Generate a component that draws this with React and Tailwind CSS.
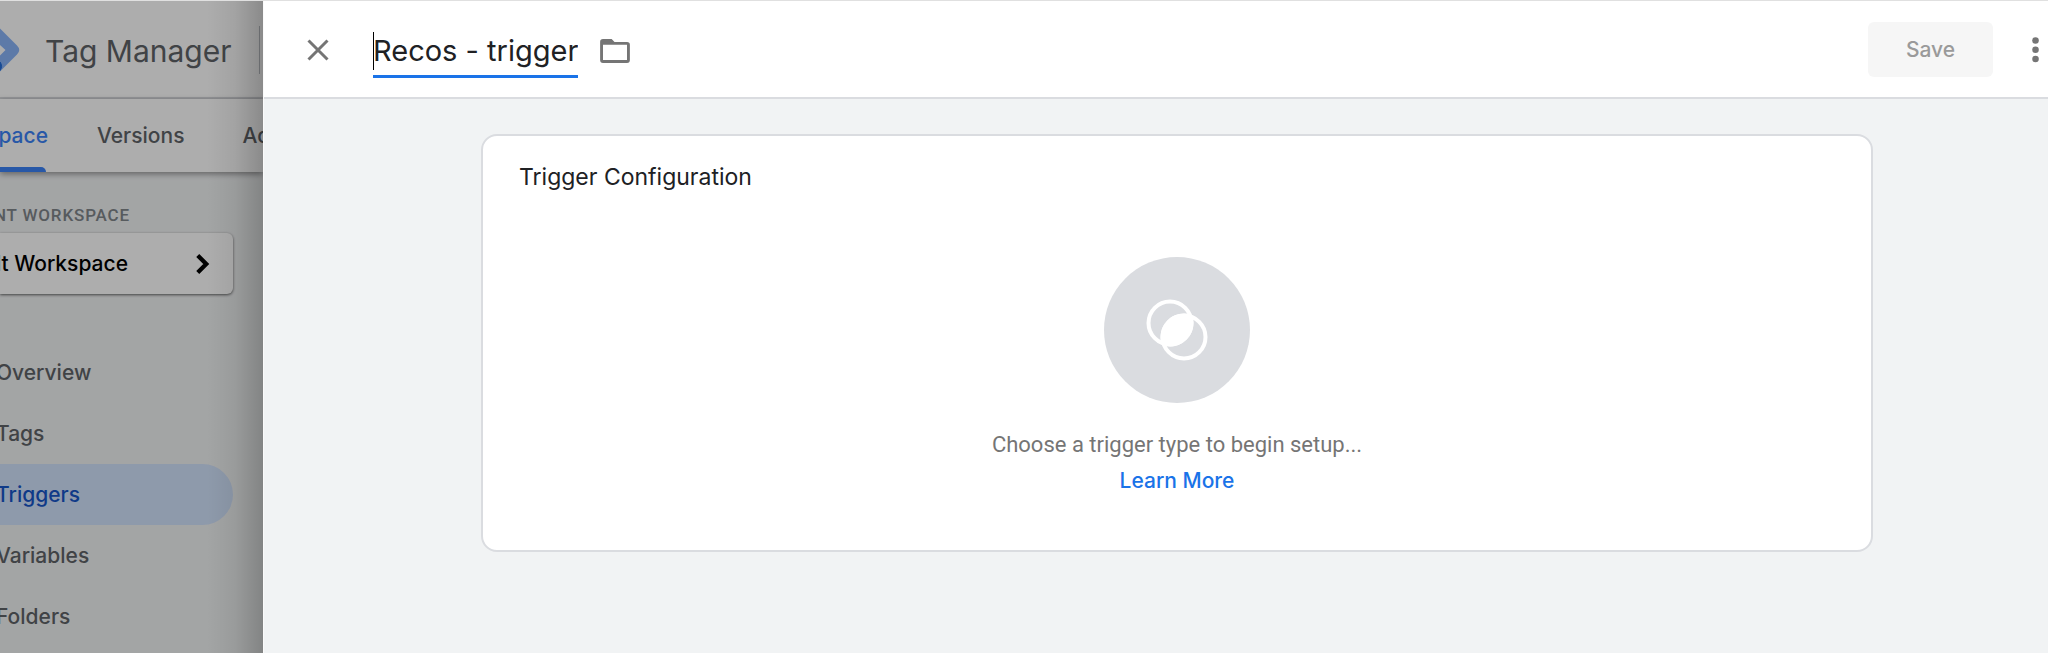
import { ChevronRight } from 'lucide-react';

const NAV_ITEMS = ['Overview', 'Tags', 'Triggers', 'Variables', 'Folders'];

function TagManagerLogo() {
  return (
    <svg width="20" height="44" viewBox="0 0 20 44" className="shrink-0" aria-hidden="true">
      <path d="M0 0.5 L17 17.500 Q21.500 22 17 26.500 L0 43.500 Z M0 17 L0 27.500 L5.500 22 Z" fill="#8ab4f8" fillRule="evenodd" />
      <path d="M0 34 A7 7 0 0 1 0 42.500 Z" fill="#246fdb" stroke="#246fdb" />
    </svg>
  );
}

function TriggerIcon() {
  return (
    <svg width="62" height="62" viewBox="0 0 62 62" aria-hidden="true">
      <circle cx="24" cy="24" r="21.500" fill="none" stroke="#fff" strokeWidth="4" />
      <circle cx="38" cy="38" r="21.500" fill="none" stroke="#fff" strokeWidth="4" />
      <path d="M46.070 15.930 A23.500 23.500 0 0 1 15.930 46.070 A23.500 23.500 0 0 1 46.070 15.930 Z" fill="#fff" />
    </svg>
  );
}

function Workspace() {
  return (
    <aside className="relative flex w-[263px] shrink-0 flex-col overflow-hidden bg-[#f1f3f4] text-[#5f6368]">
      <header className="flex h-[98px] shrink-0 items-center border-b-2 border-[#dadce0] bg-white pt-0.5">
        <TagManagerLogo />
        <h1 className="ml-[25px] w-[214px] shrink-0 whitespace-nowrap pt-0.5 text-[30px] leading-10">Tag Manager</h1>
        <div className="h-12 border-l border-[#bdc1c6]" />
      </header>

      <nav className="z-10 flex h-[73px] shrink-0 items-stretch whitespace-nowrap bg-white text-[21px] font-medium shadow-[0_2px_6px_rgba(0,0,0,0.4)]">
        <a href="#workspace" className="flex w-12 shrink-0 flex-col justify-between text-[#3b82f6]">
          <span className="flex h-[68px] items-center justify-end pt-1.5">Workspace</span>
          <span className="h-[5px] w-[46px] rounded-tr-md bg-[#3b82f6]" />
        </a>
        <a href="#versions" className="ml-[49px] flex h-[68px] items-center pt-1.5">Versions</a>
        <a href="#admin" className="ml-[58px] flex h-[68px] items-center pt-1.5">Admin</a>
      </nav>

      <section className="pt-[31px]">
        <h2 className="flex w-[130px] justify-end whitespace-nowrap font-[Roboto] text-[17px] font-medium leading-6 tracking-wider text-[#80868b]">
          CURRENT WORKSPACE
        </h2>
        <button className="mt-[6px] flex h-[61px] w-[233px] items-center rounded-r-md bg-white text-[21px] font-medium text-black shadow-[0_1px_3px_rgba(0,0,0,0.6)]">
          <span className="flex w-32 justify-end whitespace-nowrap">Default Workspace</span>
          <ChevronRight className="ml-[57px] size-[34px]" strokeWidth={3} strokeLinecap="butt" strokeLinejoin="miter" />
        </button>
      </section>

      <nav className="mt-12 text-[21px] font-medium">
        {NAV_ITEMS.map((item) => (
          <a
            key={item}
            href={`#${item.toLowerCase()}`}
            className={`-ml-1 flex h-[61px] w-[237px] items-center ${item === 'Triggers' ? 'rounded-r-full bg-[#d2e3fc] text-[#1756c9]' : ''}`}
          >
            {item}
          </a>
        ))}
      </nav>

      {/* scrim behind the open panel, darker next to its edge */}
      <div className="absolute inset-0 z-20 flex justify-end bg-black/32">
        <div className="w-14 bg-linear-to-l from-black/20 via-black/6 to-transparent" />
      </div>
    </aside>
  );
}

function PanelHeader() {
  return (
    <header className="flex h-[98px] items-center border-b-2 border-[#dadce0] bg-white pt-0.5">
      <button aria-label="Close" className="ml-9 flex size-9 items-center justify-center">
        <svg width="22" height="22" viewBox="0 0 22 22" stroke="#757575" strokeWidth="3" aria-hidden="true">
          <path d="M1.500 1.500 L20.500 20.500 M20.500 1.500 L1.500 20.500" />
        </svg>
      </button>
      <div className="relative ml-[37px] mt-1 border-b-[3px] border-[#1a73e8]">
        <input
          aria-label="Trigger name"
          defaultValue="Recos - trigger"
          className="block h-[49px] w-[205px] bg-transparent text-[29px] text-[#202124] outline-none"
        />
        <span className="absolute left-0 top-1.5 h-[38px] w-px bg-black" />
      </div>
      <button aria-label="Move to folder" className="ml-[22px] flex items-center pt-0.5">
        <svg width="30" height="24" viewBox="0 0 31 25" aria-hidden="true">
          <path d="M3 0 H12 L15 3 H28 Q31 3 31 6 V22 Q31 25 28 25 H3 Q0 25 0 22 V3 Q0 0 3 0 Z M3 6 V22 H28 V6 Z" fill="#757575" fillRule="evenodd" />
        </svg>
      </button>
      <button disabled className="mb-0.5 ml-auto h-[55px] w-[125px] rounded-md bg-[#f6f6f6] pt-0.5 text-[21px] font-medium text-[#9a9a9a]">
        Save
      </button>
      <button aria-label="More actions" className="ml-[35px] mr-[5px] flex w-[15px] justify-center">
        <svg width="7" height="26" viewBox="0 0 7 26" fill="#757575" aria-hidden="true">
          <circle cx="3.500" cy="3.500" r="3.300" />
          <circle cx="3.500" cy="12.800" r="3.300" />
          <circle cx="3.500" cy="22" r="3.300" />
        </svg>
      </button>
    </header>
  );
}

export default function App() {
  return (
    <div className="flex min-h-screen border-t border-[#e0e0e0] font-[Inter,sans-serif]">
      <Workspace />
      <main className="min-w-0 flex-1 border-l border-[#fafafa] bg-[#f1f3f4]">
        <PanelHeader />
        <div className="pb-12 pl-[217px] pr-[175px] pt-[35px]">
          <section className="rounded-2xl border-2 border-[#dadce0] bg-white px-9 pb-[51px] pt-[25px]">
            <h2 className="text-[23px] leading-8 text-[#202124]">Trigger Configuration</h2>
            <div className="mt-16 flex flex-col items-center">
              <button aria-label="Choose trigger type" className="flex size-[146px] items-center justify-center rounded-full bg-[#dadce0]">
                <TriggerIcon />
              </button>
              <p className="mt-6 font-[Roboto] text-[22px] leading-9 text-[#757575]">
                Choose a trigger type to begin setup...
              </p>
              <a href="#learn-more" className="text-[21px] font-medium leading-9 text-[#1a73e8]">Learn More</a>
            </div>
          </section>
        </div>
      </main>
    </div>
  );
}
